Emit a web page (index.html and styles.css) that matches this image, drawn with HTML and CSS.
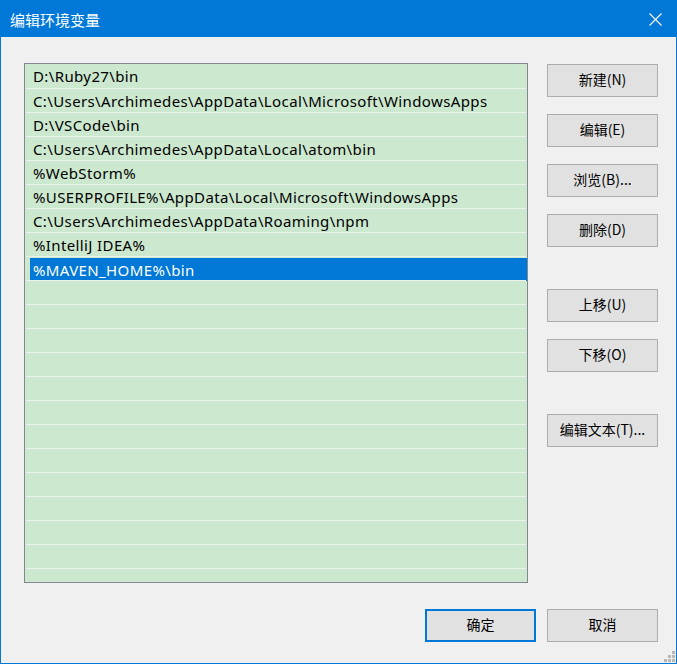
FILE: index.html
```html
<!DOCTYPE html>
<html lang="zh-CN">
<head>
<meta charset="utf-8">
<title>编辑环境变量</title>
<link rel="stylesheet" href="styles.css">
</head>
<body>
<div class="window">
  <div class="titlebar">
    <span class="title">编辑环境变量</span>
    <svg class="close" width="13" height="13" viewBox="0 0 13 13"><path d="M0.5 0.5 L12.5 12.5 M12.5 0.5 L0.5 12.5" stroke="#fff" stroke-width="1.1" fill="none"/></svg>
  </div>
  <div class="main">
    <div class="list">
      <div class="row">D:\Ruby27\bin</div>
      <div class="row">C:\Users\Archimedes\AppData\Local\Microsoft\WindowsApps</div>
      <div class="row">D:\VSCode\bin</div>
      <div class="row">C:\Users\Archimedes\AppData\Local\atom\bin</div>
      <div class="row">%WebStorm%</div>
      <div class="row">%USERPROFILE%\AppData\Local\Microsoft\WindowsApps</div>
      <div class="row">C:\Users\Archimedes\AppData\Roaming\npm</div>
      <div class="row">%IntelliJ IDEA%</div>
      <div class="row"><span class="sel">%MAVEN_HOME%\bin</span></div>
      <div class="row"></div><div class="row"></div><div class="row"></div>
      <div class="row"></div><div class="row"></div><div class="row"></div>
      <div class="row"></div><div class="row"></div><div class="row"></div>
      <div class="row"></div><div class="row"></div><div class="row"></div>
      <div class="row"></div>
    </div>
    <div class="side">
      <button class="btn">新建(N)</button>
      <button class="btn">编辑(E)</button>
      <button class="btn">浏览(B)...</button>
      <button class="btn">删除(D)</button>
      <button class="btn group">上移(U)</button>
      <button class="btn">下移(O)</button>
      <button class="btn group">编辑文本(T)...</button>
    </div>
  </div>
  <div class="footer">
    <button class="btn default">确定</button>
    <button class="btn">取消</button>
  </div>
  <div class="grip">
    <i class="d d1"></i><i class="d d2"></i><i class="d d3"></i>
    <i class="d d4"></i><i class="d d5"></i><i class="d d6"></i>
  </div>
</div>
</body>
</html>
```

FILE: styles.css
```css
html, body {
  margin: 0;
  padding: 0;
  background: #f0f0f0;
}

.window {
  position: relative;
  width: 677px;
  height: 664px;
  box-sizing: border-box;
  border: 1px solid #0078d7;
  background: #f0f0f0;
  display: flex;
  flex-direction: column;
  font-family: "Noto Sans", "Noto Sans CJK SC", sans-serif;
}

.titlebar {
  height: 36px;
  flex: none;
  background: #0078d7;
  display: flex;
  align-items: center;
  justify-content: space-between;
  padding: 0 14px 0 9px;
  color: #fff;
}

.title {
  font-family: "Noto Sans CJK SC", sans-serif;
  font-size: 15px;
  line-height: 15px;
}

.close {
  display: block;
}

.main {
  display: flex;
  align-items: flex-start;
  gap: 19px;
  padding: 26px 0 0 23px;
}

.list {
  width: 504px;
  height: 520px;
  box-sizing: border-box;
  border: 1px solid #828790;
  background: #cce8cf;
  overflow: hidden;
  padding: 0 1px;
}

.row {
  height: 24px;
  box-sizing: border-box;
  border-top: 1px solid #eaf2ea;
  padding-left: 7px;
  font-size: 15px;
  letter-spacing: 0.38px;
  line-height: 23px;
  color: #000;
  white-space: nowrap;
}

.row:first-child {
  border-top: none;
  padding-top: 1px;
}

.row .sel {
  display: block;
  margin: 0 -1px 0 -3px;
  padding-left: 3px;
  padding-top: 1px;
  background: #0078d7;
  color: #fff;
  height: 23px;
  line-height: 22px;
  box-sizing: border-box;
}

.row:not(:first-child) {
  padding-top: 1px;
  line-height: 22px;
}

.side {
  display: flex;
  flex-direction: column;
  gap: 17px;
  padding-top: 1px;
}

.btn {
  width: 111px;
  height: 33px;
  box-sizing: border-box;
  border: 1px solid #adadad;
  background: #e1e1e1;
  font-family: "Noto Sans CJK SC", sans-serif;
  font-size: 14px;
  color: #000;
  padding: 0 0 3px 0;
  margin: 0;
  line-height: 1;
}

.btn.group {
  margin-top: 25px;
}

.btn.default {
  border: 2px solid #0078d7;
}

.footer {
  display: flex;
  justify-content: flex-end;
  gap: 11px;
  padding: 26px 18px 0 0;
}

.grip {
  position: absolute;
  right: 1px;
  bottom: 1px;
  width: 12px;
  height: 12px;
}

.d {
  position: absolute;
  width: 3px;
  height: 3px;
  background: #b8b8b8;
}
.d1 { right: 0; bottom: 0; }
.d2 { right: 4px; bottom: 0; }
.d3 { right: 8px; bottom: 0; }
.d4 { right: 0; bottom: 4px; }
.d5 { right: 4px; bottom: 4px; }
.d6 { right: 0; bottom: 8px; }
```
